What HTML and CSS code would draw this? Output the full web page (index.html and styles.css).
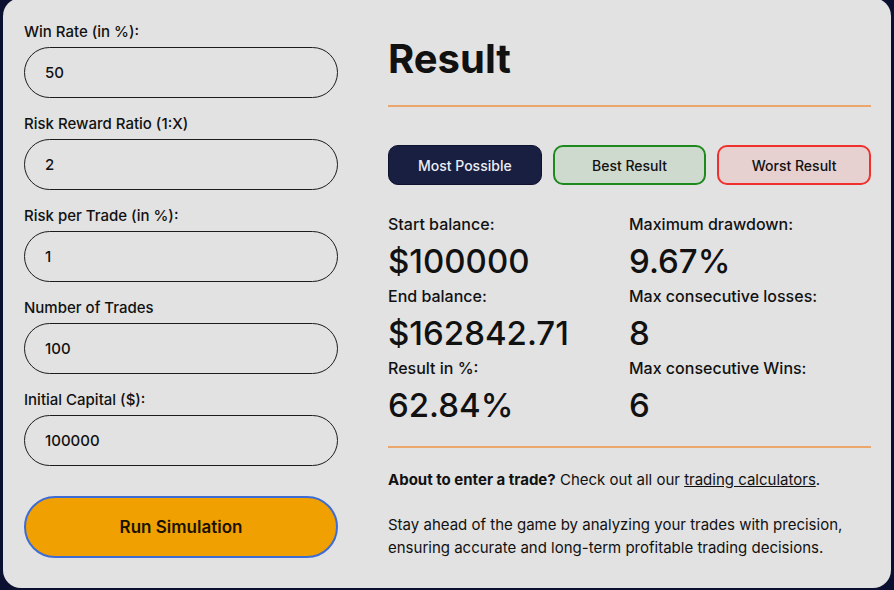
FILE: index.html
```html
<!DOCTYPE html>
<html lang="en">
<head>
    <meta charset="UTF-8">
    <meta name="viewport" content="width=device-width, initial-scale=1.0">
    <title>Trading Simulator</title>
    <link rel="stylesheet" href="styles.css">
</head>
<body>
    <div class="sim-card">
        <div class="sim-form">
            <div class="field">
                <label for="winRate">Win Rate (in %):</label>
                <input type="number" id="winRate" value="50">
            </div>
            <div class="field">
                <label for="riskReward">Risk Reward Ratio (1:X)</label>
                <input type="number" id="riskReward" value="2">
            </div>
            <div class="field">
                <label for="riskPerTrade">Risk per Trade (in %):</label>
                <input type="number" id="riskPerTrade" value="1">
            </div>
            <div class="field">
                <label for="numTrades">Number of Trades</label>
                <input type="number" id="numTrades" value="100">
            </div>
            <div class="field">
                <label for="initialCapital">Initial Capital ($):</label>
                <input type="number" id="initialCapital" value="100000">
            </div>
            <button class="run-btn">Run Simulation</button>
        </div>

        <div class="sim-result">
            <h2>Result</h2>
            <hr class="divider">
            <div class="tabs">
                <button class="tab tab-most">Most Possible</button>
                <button class="tab tab-best">Best Result</button>
                <button class="tab tab-worst">Worst Result</button>
            </div>
            <div class="stats">
                <div class="stat">
                    <div class="stat-label">Start balance:</div>
                    <div class="stat-value">$100000</div>
                </div>
                <div class="stat">
                    <div class="stat-label">Maximum drawdown:</div>
                    <div class="stat-value">9.67%</div>
                </div>
                <div class="stat">
                    <div class="stat-label">End balance:</div>
                    <div class="stat-value">$162842.71</div>
                </div>
                <div class="stat">
                    <div class="stat-label">Max consecutive losses:</div>
                    <div class="stat-value">8</div>
                </div>
                <div class="stat">
                    <div class="stat-label">Result in %:</div>
                    <div class="stat-value">62.84%</div>
                </div>
                <div class="stat">
                    <div class="stat-label">Max consecutive Wins:</div>
                    <div class="stat-value">6</div>
                </div>
            </div>
            <hr class="divider divider-bottom">
            <p class="note"><strong>About to enter a trade?</strong> Check out all our <a href="#">trading calculators</a>.</p>
            <p class="note">Stay ahead of the game by analyzing your trades with precision, ensuring accurate and long-term profitable trading decisions.</p>
        </div>
    </div>
</body>
</html>
```

FILE: styles.css
```css
:root {
    --navy: #0c1030;
    --card-bg: #e2e2e2;
    --text-color: #111111;
    --orange: #f0a000;
    --line-color: #eba66c;
}
* {
    box-sizing: border-box;
}
body {
    margin: 0;
    background-color: var(--navy);
    font-family: 'Inter', 'Roboto', sans-serif;
    color: var(--text-color);
    height: 590px;
    overflow: hidden;
}
.sim-card {
    margin: -2px 3px 0 3px;
    height: 590px;
    background-color: var(--card-bg);
    border-radius: 18px;
    padding: 25px 20px 0 21px;
    display: grid;
    grid-template-columns: 314px 483px;
    column-gap: 50px;
    align-items: start;
}
.field {
    margin-bottom: 17px;
}
.field label {
    display: block;
    font-size: 15px;
    line-height: 18px;
    font-weight: 500;
    margin-bottom: 6px;
}
.field input {
    display: block;
    width: 100%;
    height: 51px;
    border: 1px solid #1c1c1c;
    border-radius: 26px;
    background-color: var(--card-bg);
    padding: 0 20px;
    font-family: inherit;
    font-size: 15px;
    font-weight: 500;
    color: var(--text-color);
    outline: none;
}
.run-btn {
    display: block;
    width: 100%;
    height: 62px;
    margin-top: 30px;
    background-color: var(--orange);
    border: 2px solid #3d6cd4;
    border-radius: 31px;
    font-family: inherit;
    font-size: 17px;
    font-weight: 600;
    color: #1a1200;
    cursor: pointer;
}
.sim-result {
    padding-top: 12px;
}
.sim-result h2 {
    margin: 0;
    font-size: 40px;
    line-height: 48px;
    font-weight: 700;
}
.divider {
    border: none;
    height: 2px;
    background-color: var(--line-color);
    margin: 22px 0 0 0;
}
.tabs {
    display: grid;
    grid-template-columns: repeat(3, 1fr);
    gap: 11px;
    margin-top: 38px;
}
.tab {
    height: 40px;
    border-radius: 10px;
    font-family: inherit;
    font-size: 14px;
    font-weight: 500;
    cursor: pointer;
}
.tab-most {
    background-color: #191f40;
    border: 1px solid #0e1230;
    color: #eceef5;
}
.tab-best {
    background-color: #cfdacf;
    border: 2px solid #1e8a1e;
    color: #111;
}
.tab-worst {
    background-color: #e6d0d0;
    border: 2px solid #f0302c;
    color: #111;
}
.stats {
    display: grid;
    grid-template-columns: 241px 1fr;
    row-gap: 7px;
    margin-top: 30px;
}
.stat-label {
    font-size: 16px;
    line-height: 19px;
    font-weight: 500;
    margin-bottom: 8px;
}
.stat-value {
    font-size: 33px;
    line-height: 38px;
    font-weight: 500;
}
.divider-bottom {
    margin-top: 22px;
}
.note {
    font-size: 15px;
    line-height: 23px;
    margin: 20px 0 0 0;
}
.note + .note {
    margin-top: 22px;
}
.note strong {
    font-weight: 700;
}
.note a {
    color: inherit;
}
```
